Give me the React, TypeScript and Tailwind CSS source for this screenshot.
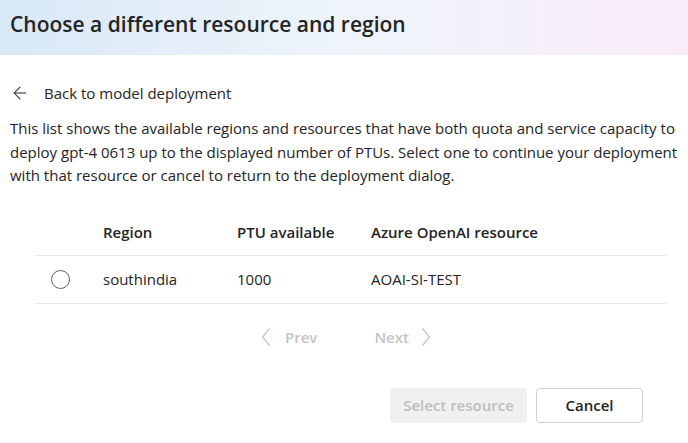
import { ArrowLeft } from 'lucide-react';

const rows = [{ region: 'southindia', ptu: '1000', resource: 'AOAI-SI-TEST' }];

function Chevron({ dir }: { dir: 'left' | 'right' }) {
  return (
    <svg width="10" height="20" viewBox="0 0 10 20" fill="none" stroke="currentColor" strokeWidth="1.2">
      {dir === 'left' ? <path d="M8.5 1.5 L1.5 10 L8.5 18.5" /> : <path d="M1.5 1.5 L8.5 10 L1.5 18.5" />}
    </svg>
  );
}

export default function App() {
  return (
    <div
      className="w-[688px] h-[443px] bg-white text-[#242424] overflow-hidden"
      style={{ fontFamily: '"Open Sans", "Noto Sans", sans-serif' }}
    >
      <div className="h-[55px] flex items-center px-[10px] bg-gradient-to-r from-[#d8e8f6] via-[#eef4fb] to-[#f9ecf8]">
        <h1 className="text-[21px] font-semibold leading-none pb-[6px]">
          Choose a different resource and region
        </h1>
      </div>

      <div className="px-[10px]">
        <button className="mt-[28px] flex items-center gap-[14px] text-[15px] leading-[20px]">
          <ArrowLeft size={20} strokeWidth={1.25} />
          <span>Back to model deployment</span>
        </button>

        <p className="mt-[14px] text-[15px] leading-[23.5px]">
          This list shows the available regions and resources that have both quota and service capacity to deploy
          gpt-4 0613 up to the displayed number of PTUs. Select one to continue your deployment with that resource
          or cancel to return to the deployment dialog.
        </p>

        <div className="mt-[22px] ml-[24px] mr-[11px]">
          <div className="h-[46px] flex items-center border-b border-[#ebebeb] text-[15px] font-semibold">
            <div className="w-[69px]" />
            <div className="w-[134px]">Region</div>
            <div className="w-[134px]">PTU available</div>
            <div>Azure OpenAI resource</div>
          </div>
          {rows.map((r) => (
            <div key={r.region} className="h-[48px] flex items-center border-b border-[#ebebeb] text-[15px]">
              <div className="w-[69px] flex pl-[17px]">
                <span className="w-[19px] h-[19px] rounded-full border border-[#616161]" />
              </div>
              <div className="w-[134px]">{r.region}</div>
              <div className="w-[134px]">{r.ptu}</div>
              <div>{r.resource}</div>
            </div>
          ))}
        </div>

        <div className="mt-[22px] flex items-center justify-center gap-[57px] text-[15px] font-semibold text-[#c4c4c4] pl-[4px]">
          <span className="flex items-center gap-[14px]">
            <Chevron dir="left" />
            Prev
          </span>
          <span className="flex items-center gap-[12px]">
            Next
            <Chevron dir="right" />
          </span>
        </div>

        <div className="mt-[40px] flex justify-end gap-[9px] pr-[35px]">
          <button className="w-[137px] h-[35px] rounded-[4px] bg-[#f0f0f0] text-[#bdbdbd] text-[15px] font-semibold">
            Select resource
          </button>
          <button className="w-[107px] h-[35px] rounded-[4px] border border-[#d1d1d1] bg-white text-[15px] font-semibold">
            Cancel
          </button>
        </div>
      </div>
    </div>
  );
}
